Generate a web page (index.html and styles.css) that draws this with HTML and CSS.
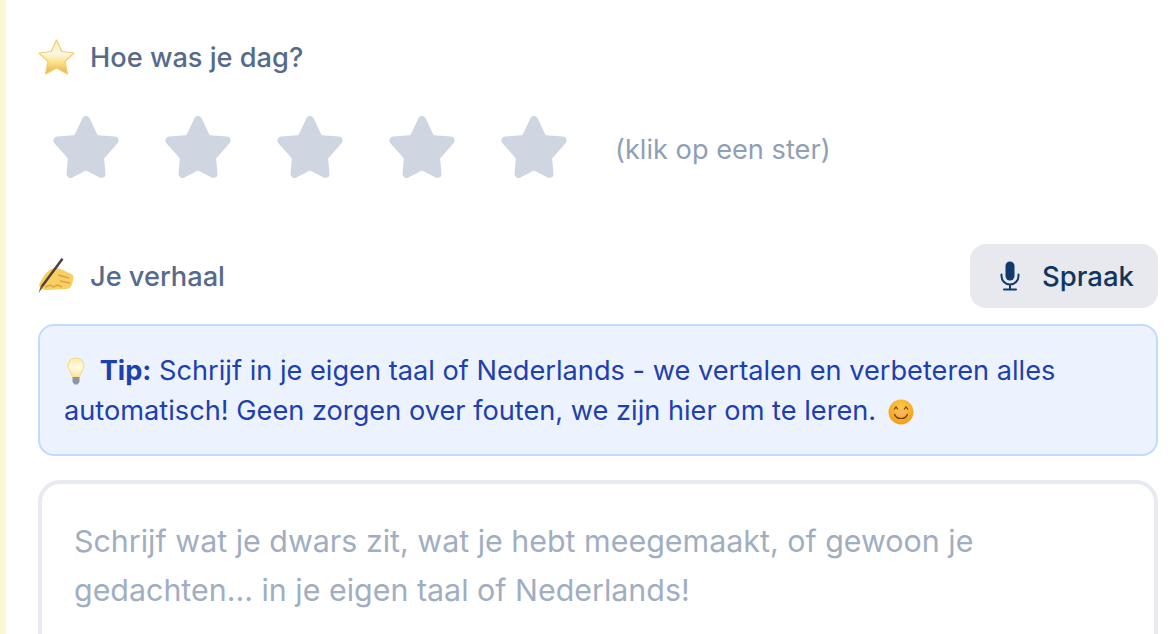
FILE: index.html
```html
<!DOCTYPE html>
<html lang="nl">
<head>
  <meta charset="UTF-8"/>
  <meta name="viewport" content="width=device-width, initial-scale=1.0"/>
  <title>Dagboek</title>
  <link rel="stylesheet" href="styles.css">
</head>
<body>
  <div class="page">
    <svg width="0" height="0" class="defs">
      <defs>
        <linearGradient id="goldStar" x1="0" y1="0" x2="0" y2="1">
          <stop offset="0" stop-color="#fdeeb8"/>
          <stop offset="0.4" stop-color="#fbf7e6"/>
          <stop offset="0.65" stop-color="#fde28a"/>
          <stop offset="1" stop-color="#e9ad4c"/>
        </linearGradient>
        <linearGradient id="bulbGlass" x1="0" y1="0" x2="0" y2="1">
          <stop offset="0" stop-color="#fde9a4"/>
          <stop offset="0.5" stop-color="#fffbe6"/>
          <stop offset="1" stop-color="#fde69a"/>
        </linearGradient>
        <radialGradient id="smileFace" cx="0.5" cy="0.3" r="0.75">
          <stop offset="0" stop-color="#fdc84a"/>
          <stop offset="1" stop-color="#f19a16"/>
        </radialGradient>
        <path id="rateStar" d="M34 4 L43 23 L62.500 24.500 L48 41 L49.500 58 L34 50 L18.500 58 L20 41 L5.500 24.500 L25 23 Z"/>
      </defs>
    </svg>

    <main class="content">
      <section class="rating">
        <div class="label-row">
          <svg class="emoji" viewBox="0 0 37 36">
            <path d="M18.5 1 L23.800 12.500 L36 14 L27 22.400 L29.500 35 L18.5 29 L7.500 35 L10 22.400 L1 14 L13.200 12.500 Z" fill="url(#goldStar)" stroke="#f5cb6c" stroke-width="1.200" stroke-linejoin="round"/>
          </svg>
          <span class="label">Hoe was je dag?</span>
        </div>
        <div class="stars">
          <svg class="star" viewBox="0 0 68 66"><use href="#rateStar"/></svg>
          <svg class="star" viewBox="0 0 68 66"><use href="#rateStar"/></svg>
          <svg class="star" viewBox="0 0 68 66"><use href="#rateStar"/></svg>
          <svg class="star" viewBox="0 0 68 66"><use href="#rateStar"/></svg>
          <svg class="star" viewBox="0 0 68 66"><use href="#rateStar"/></svg>
          <span class="hint">(klik op een ster)</span>
        </div>
      </section>

      <section class="story">
        <div class="story-head">
          <div class="label-row">
            <svg class="emoji" viewBox="0 0 37 36">
              <path d="M1 27 C5 17 11 10 18 10 C22 10 27 13 35 17 C36 20 35 23 34 26 C33 30 31 31 27 31 L9 32 C5 32 2 30 1 27 Z" fill="#f8cf63"/>
              <path d="M7 29 L12 27 L15 29 L20 27 L24 29 M20 17 L31 20 M22 23 L32 25" stroke="#dfa243" stroke-width="1.400" fill="none"/>
              <path d="M23.500 0 L25.500 1.500 L5 29 L3 27.500 Z" fill="#4d4038"/>
              <path d="M3 27.500 L5 29 L0.500 35 Z" fill="#5b4c42"/>
            </svg>
            <span class="label">Je verhaal</span>
          </div>
          <button class="voice-btn">
            <svg class="mic" viewBox="0 0 20 30">
              <rect x="5.500" y="0.500" width="9" height="19" rx="4.500" fill="#0f3a6b"/>
              <path d="M1.500 13.500 V15 a8.500 8.500 0 0 0 17 0 V13.500 M10 23.500 V28.500 M4 28.500 H16" fill="none" stroke="#0f3a6b" stroke-width="2" stroke-linecap="round"/>
            </svg>
            <span>Spraak</span>
          </button>
        </div>

        <div class="tip">
          <svg class="tip-emoji" viewBox="0 0 18 28">
            <path d="M9 1 C4 1 1 4.500 1 9 C1 13 4.500 14.500 5.500 20 H12.500 C13.500 14.500 17 13 17 9 C17 4.500 14 1 9 1 Z" fill="url(#bulbGlass)" stroke="#fbdc84" stroke-width="1.2"/>
            <path d="M5.500 20 H12.500 V25 L10.500 27.500 H7.500 L5.500 25 Z" fill="#8d96a3"/>
          </svg>
          <b>Tip:</b> Schrijf in je eigen taal of Nederlands - we vertalen en verbeteren alles automatisch! Geen zorgen over fouten, we zijn hier om te leren.
          <svg class="tip-emoji smile" viewBox="0 0 26 26">
            <circle cx="13" cy="13" r="12.500" fill="url(#smileFace)"/>
            <path d="M6 10.500 L8 8 L10 10.500 M16 10.500 L18 8 L20 10.500" fill="none" stroke="#6b3f10" stroke-width="1.200"/>
            <ellipse cx="13" cy="14" rx="4" ry="3" fill="#f6b36b"/>
            <path d="M6.500 15 C8 21 18 21 19.500 15" fill="none" stroke="#6b3f10" stroke-width="1.200"/>
          </svg>
        </div>

        <div class="entry">
          <p class="placeholder">Schrijf wat je dwars zit, wat je hebt meegemaakt, of gewoon je gedachten... in je eigen taal of Nederlands!</p>
        </div>
      </section>
    </main>
  </div>
</body>
</html>
```

FILE: styles.css
```css
* { box-sizing: border-box; }
html, body { height: 100%; margin: 0; padding: 0; }
body {
  background: #fff;
  font-family: Inter, 'Liberation Sans', sans-serif;
  overflow: hidden;
}
.defs { position: absolute; }
.page {
  height: 634px;
  overflow: hidden;
  border-left: 6px solid #faf7d5;
}
.content {
  width: 1152px;
  padding: 38px 0 0 32px;
}

/* labels */
.label-row {
  display: flex;
  align-items: center;
  gap: 15px;
  height: 38px;
}
.emoji { width: 37px; height: 36px; flex: none; }
.label {
  font-size: 27.2px;
  font-weight: 450;
  color: #566b8c;
}

/* rating */
.stars {
  display: flex;
  align-items: center;
  gap: 44px;
  margin-top: 40px;
  padding-left: 14px;
  height: 66px;
}
.star {
  width: 68px;
  height: 66px;
  flex: none;
  fill: #cfd6e1;
  stroke: #cfd6e1;
  stroke-width: 8;
  stroke-linejoin: round;
}
.hint {
  font-size: 27.2px;
  color: #8f9fb5;
  margin-left: 3px;
}

/* story */
.story { margin-top: 62px; }
.story-head {
  display: flex;
  align-items: center;
  justify-content: space-between;
  height: 64px;
}
.voice-btn {
  display: flex;
  align-items: center;
  gap: 22px;
  width: 188px;
  height: 64px;
  padding: 0 0 0 30px;
  border: none;
  border-radius: 16px;
  background: #e7e9ee;
  color: #10365f;
  font-family: inherit;
  font-size: 27.5px;
  font-weight: 450;
  cursor: pointer;
}
.mic { width: 20px; height: 30px; flex: none; }

.tip {
  margin-top: 16px;
  height: 132px;
  padding: 25px 24px 0;
  border: 2px solid #bfdbfe;
  border-radius: 16px;
  background: #edf3fe;
  color: #1e40af;
  font-size: 27.2px;
  line-height: 40px;
}
.tip b { font-weight: 700; margin-left: 5px; }
.tip-emoji { width: 18px; height: 28px; vertical-align: -5px; margin: 0 2px 0 3px; }
.tip-emoji.smile { width: 26px; height: 26px; margin-left: 4px; }

.entry {
  margin-top: 24px;
  height: 260px;
  padding: 33px 32px;
  border: 4px solid #e7eaf0;
  border-radius: 22px;
}
.placeholder {
  margin: 0;
  font-size: 30.4px;
  line-height: 49px;
  color: #a1aec2;
}
```
